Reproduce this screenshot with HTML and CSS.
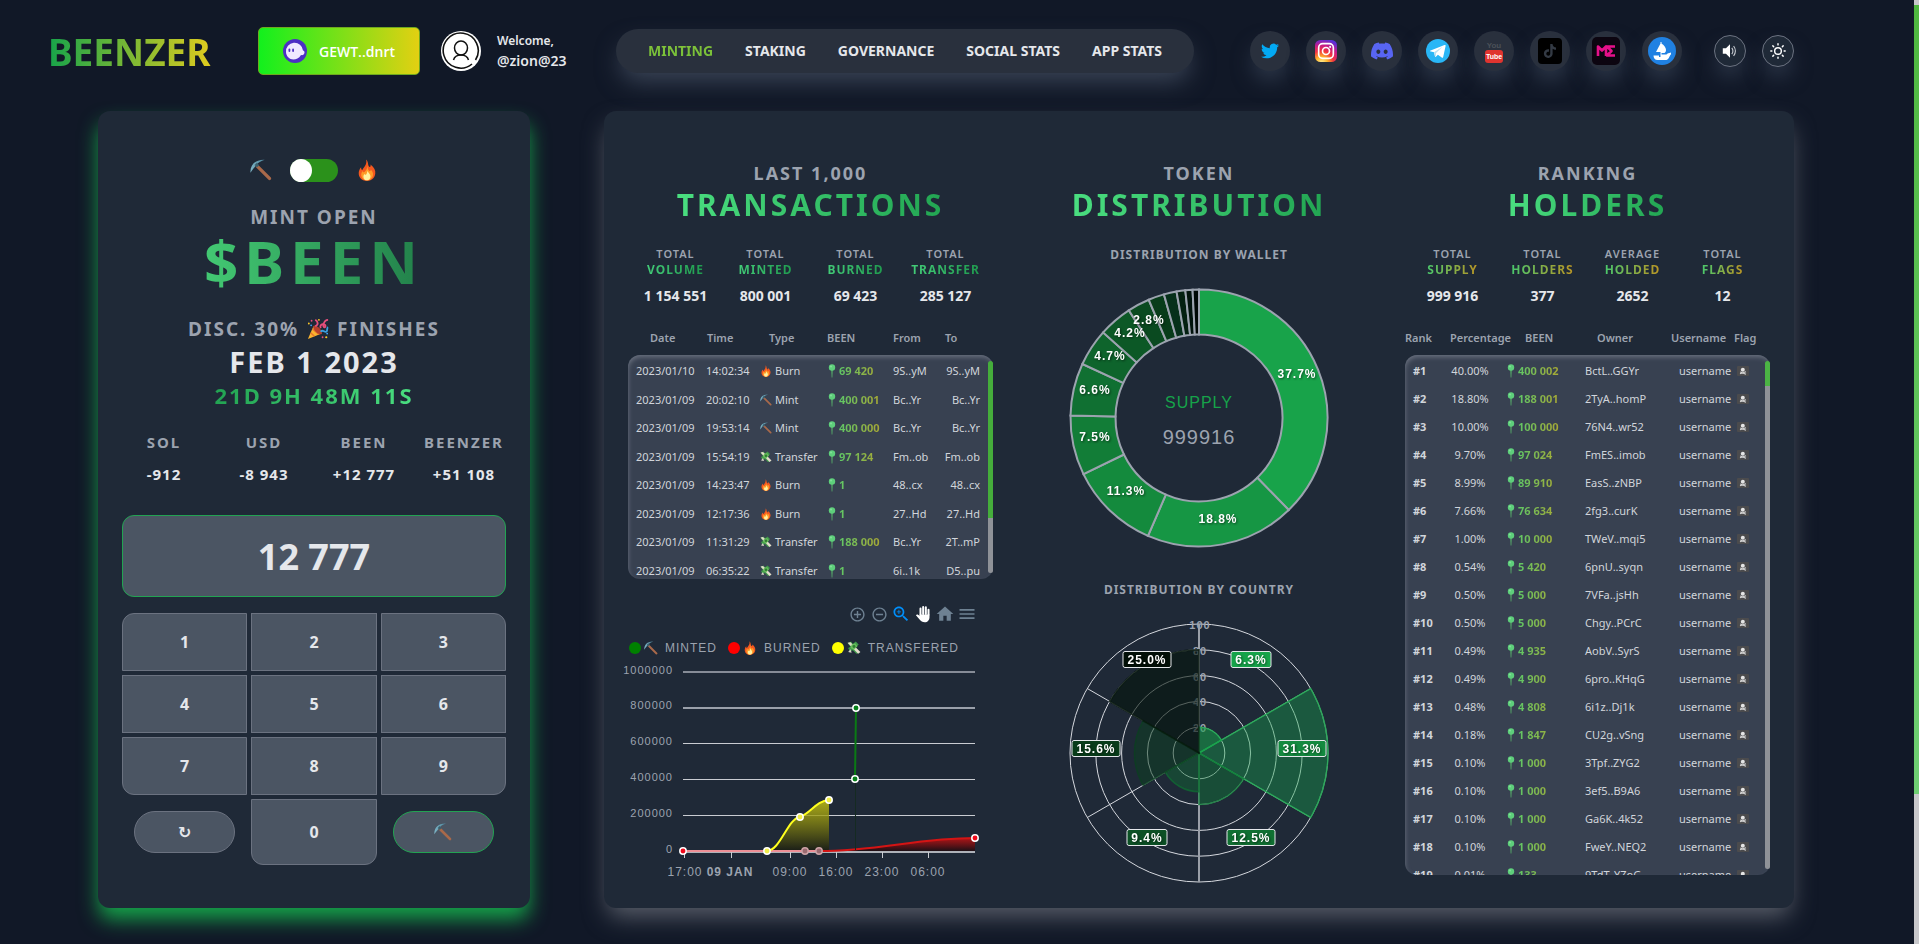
FILE: index.html
```html
<!DOCTYPE html>
<html lang="en">
<head>
<meta charset="utf-8">
<meta name="viewport" content="width=device-width, initial-scale=1">
<title>BEENZER</title>
<link rel="stylesheet" href="styles.css">
<script src="app.js" defer></script>
</head>
<body>
<svg class="sprite" aria-hidden="true">
  <linearGradient id="steel" x1="0" y1="0" x2="1" y2="0"><stop offset="0" stop-color="#7db4c6"/><stop offset="1" stop-color="#4a8499"/></linearGradient>
  <symbol id="pick" viewBox="0 0 24 24">
    <path d="M8.500 6 22.500 20 a1.600 1.600 0 0 1 -2.300 2.700 L6 8.500z" fill="#a9694a"/>
    <path d="M.5 15C0 6.500 6 .3 16 .8c-5 1.700-7.500 3.700-9 5.700S3 11 .5 15z" fill="url(#steel)"/>
    <path d="M5 6.500 7.500 4 10 6.800 7.600 9.300z" fill="#3b5f6c"/>
  </symbol>
  <symbol id="fire" viewBox="0 0 24 24">
    <path d="M11 .5c3 3 1.500 6 3.500 8 1 .8 1.800-.3 1.300-2.500C20 9 21.500 12.500 21 16c-.5 4.800-4.500 7.800-9 7.800S3.500 21 3 16.500c-.3-3 1-6 2.600-7.500-.1 2 .4 3 1.400 3C8 9 12.500 6.500 11 .5z" fill="#f4581f"/>
    <path d="M12 6.500c1 3 .5 4.500 2.500 6.500.8.500 1.500 0 1.700-1.300 2 2 2.600 3.800 2.300 6-.5 3.500-3.300 5.700-6.500 5.700s-6-2.200-6.300-5.600c-.1-2 .6-3.800 1.600-4.800.2 1.200.7 1.700 1.500 1.500C11 13 12.800 10.500 12 6.500z" fill="#ff9b28"/>
    <path d="M12.300 12.500c.5 2.300 3.500 3.300 3.500 6.700 0 2.500-1.700 4.100-3.800 4.100s-3.900-1.500-3.900-4c0-1.500.7-2.500 1.500-3 .3 1 .9 1.200 1.400.7.800-.9 1.300-2 1.300-4.500z" fill="#fff0a0"/>
  </symbol>
  <symbol id="cash" viewBox="0 0 24 24">
    <path d="M1 4 7 1l3 4 5-4 5 5-5 5 7 9-6 2-6-6-5 2-3-6 4-2z" fill="#3f9b4a"/>
    <path d="M1 3 19 22 23 19 6 2z" fill="#e3dccb"/>
    <path d="M8 6 14 4 18 9 12 15 6 12z" fill="#68bb5c"/><circle cx="12" cy="9.500" r="2.500" fill="#2e7d32"/>
    <path d="M2 19l4-5 2 6z" fill="#d7d2c6"/>
  </symbol>
  <symbol id="party" viewBox="0 0 24 24">
    <path d="M1 23 7 9l9 8z" fill="#f9b32f"/><path d="M4 16 8 20M6 12l7 6" stroke="#e8752a" stroke-width="1.500"/>
    <ellipse cx="11.500" cy="13" rx="2.800" ry="6.200" transform="rotate(-45 11.500 13)" fill="#b5402c"/>
    <path d="M9 9c4-2 3-5 0-7M15 11c-2-4 4-6 5-3s-3 3-2-1 3-5 5-5" fill="none" stroke="#e64e7c" stroke-width="2"/>
    <path d="M15 15c2-3 4 1 6 0s0-4 2-5" fill="none" stroke="#3b9fe0" stroke-width="2"/>
    <g fill="#ffca28"><circle cx="2" cy="6" r="1"/><circle cx="13" cy="2" r="1"/><circle cx="21" cy="21" r="1.200"/></g>
    <g fill="#e64e7c"><circle cx="5" cy="3" r="1"/><circle cx="17" cy="21" r="1"/></g><g fill="#42a5f5"><circle cx="4.500" cy="8" r="1"/><circle cx="22" cy="17" r="1"/></g>
  </symbol>
  <symbol id="pin" viewBox="0 0 8 14"><path d="M3.400 6h1.200L4.300 13.500h-.6z" fill="#5dc36f"/><circle cx="4" cy="3.500" r="3.200" fill="#5ecf7b"/><circle cx="3" cy="2.600" r="1" fill="#86e09b"/></symbol>
  <symbol id="flag" viewBox="0 0 12 10"><rect width="12" height="10" rx="1" fill="#4b4b4d"/><circle cx="5.800" cy="3.800" r="2" fill="#e4e4e4"/><path d="M3 7.800 9 5.800M3.200 6 9 8.200" stroke="#d6d6d6" stroke-width="1.200"/></symbol>
</svg>

<div class="shell">
<div class="page">
  <header class="top">
    <a class="logo" href="#">BEENZER</a>
    <button class="wallet" type="button">
      <svg viewBox="0 0 24 24" aria-hidden="true"><circle cx="12" cy="12" r="12" fill="#4c2fc4"/><path d="M3 13a8.500 8.500 0 0 1 17-1.500c1 .3 1.500 1 1.500 2 0 2-2 3-3.500 2.500-2 3.500-5 4.500-7.500 4.500C6.500 20.500 3 17 3 13z" fill="#efeaff"/><rect x="5.500" y="9.500" width="1.800" height="3.500" rx=".9" fill="#4c2fc4"/><rect x="9.200" y="9.500" width="1.800" height="3.500" rx=".9" fill="#4c2fc4"/></svg>
      GEWT..dnrt
    </button>
    <div class="user">
      <svg viewBox="0 0 40 40" aria-hidden="true"><circle cx="20" cy="20" r="20" fill="#fff"/><path d="M31 33a17.500 17.500 0 1 1 3.500-4" fill="none" stroke="#111" stroke-width="1.600"/><ellipse cx="20" cy="17" rx="6.500" ry="7" fill="none" stroke="#111" stroke-width="1.500"/><path d="M12.500 29c1-3.500 4-5 7.500-5s6.500 1.500 7.500 5" fill="none" stroke="#111" stroke-width="1.500"/></svg>
      <p><span>Welcome,</span><b>@zion@23</b></p>
    </div>
    <nav class="menu">
      <a class="on" href="#">MINTING</a><a href="#">STAKING</a><a href="#">GOVERNANCE</a><a href="#">SOCIAL STATS</a><a href="#">APP STATS</a>
    </nav>
    <div class="social">
      <a href="#" aria-label="Twitter"><svg viewBox="0 0 24 24" class="s18"><path fill="#03a9f4" d="M23.953 4.570a10 10 0 01-2.825.775 4.958 4.958 0 002.163-2.723c-.951.555-2.005.959-3.127 1.184a4.920 4.920 0 00-8.384 4.482C7.690 8.095 4.067 6.130 1.640 3.162a4.822 4.822 0 00-.666 2.475c0 1.710.870 3.213 2.188 4.096a4.904 4.904 0 01-2.228-.616v.060a4.923 4.923 0 003.946 4.827 4.996 4.996 0 01-2.212.085 4.936 4.936 0 004.604 3.417 9.867 9.867 0 01-6.102 2.105c-.390 0-.779-.023-1.170-.067a13.995 13.995 0 007.557 2.209c9.053 0 13.998-7.496 13.998-13.985 0-.210 0-.420-.015-.630A9.935 9.935 0 0024 4.590z"/></svg></a>
      <a href="#" aria-label="Instagram"><svg viewBox="0 0 24 24" class="s22"><defs><radialGradient id="ig" cx=".3" cy="1.050" r="1.100"><stop offset="0" stop-color="#fff2a0"/><stop offset=".25" stop-color="#ffb72b"/><stop offset=".5" stop-color="#f2353f"/><stop offset=".75" stop-color="#c51a8a"/><stop offset="1" stop-color="#5a2fd8"/></radialGradient></defs><rect width="24" height="24" rx="6" fill="url(#ig)"/><rect x="4" y="4" width="16" height="16" rx="4.500" fill="none" stroke="#fff" stroke-width="1.800"/><circle cx="12" cy="12" r="3.800" fill="none" stroke="#fff" stroke-width="1.800"/><circle cx="16.500" cy="7.500" r="1.100" fill="#fff"/></svg></a>
      <a href="#" aria-label="Discord"><svg viewBox="0 0 24 24" class="s22"><path fill="#5865f2" d="M20.317 4.370a19.791 19.791 0 00-4.885-1.515.074.074 0 00-.079.037c-.211.375-.445.865-.608 1.249-1.845-.276-3.680-.276-5.487 0-.164-.393-.406-.874-.618-1.249a.077.077 0 00-.079-.037 19.736 19.736 0 00-4.885 1.515.070.070 0 00-.032.028C.533 9.046-.319 13.580.099 18.058a.082.082 0 00.031.056c2.053 1.508 4.041 2.423 5.993 3.029a.078.078 0 00.084-.028c.462-.630.873-1.295 1.226-1.994a.076.076 0 00-.042-.106c-.653-.248-1.274-.550-1.872-.892a.077.077 0 01-.008-.128c.126-.094.252-.192.372-.291a.074.074 0 01.078-.011c3.928 1.793 8.180 1.793 12.061 0a.074.074 0 01.079.010c.120.099.246.198.373.292a.077.077 0 01-.007.128 12.299 12.299 0 01-1.873.891.077.077 0 00-.041.107c.360.698.772 1.363 1.225 1.993a.076.076 0 00.084.029c1.961-.607 3.950-1.522 6.002-3.029a.077.077 0 00.031-.055c.500-5.177-.838-9.674-3.549-13.660a.061.061 0 00-.031-.029zM8.020 15.331c-1.183 0-2.157-1.086-2.157-2.419 0-1.333.956-2.419 2.157-2.419 1.211 0 2.176 1.095 2.157 2.419 0 1.333-.956 2.419-2.157 2.419zm7.975 0c-1.183 0-2.157-1.086-2.157-2.419 0-1.333.955-2.419 2.157-2.419 1.211 0 2.176 1.095 2.157 2.419 0 1.333-.946 2.419-2.157 2.419Z"/></svg></a>
      <a href="#" aria-label="Telegram"><svg viewBox="0 0 24 24" class="s24"><circle cx="12" cy="12" r="12" fill="#29b6f6"/><path fill="#fff" d="M4 11.800 18.500 6c.7-.3 1.300.2 1.100 1.100L17.200 18c-.2.900-.8 1-1.500.6l-3.800-2.800-2 1.900c-.4.400-.8.300-.9-.2L8 13.300 4 12.300z"/><path fill="#b9dff0" d="M8 13.300l8.500-5.500-6.400 6.300-.4 3.500c-.3.200-.6 0-.7-.3z"/></svg></a>
      <a href="#" aria-label="YouTube"><svg viewBox="0 0 24 28" class="yt"><text x="12" y="11" class="you">You</text><rect x="3" y="13" width="18" height="13" rx="3" fill="#e0342f"/><text x="12" y="22" class="tube">Tube</text></svg></a>
      <a href="#" aria-label="TikTok"><svg viewBox="0 0 24 26" class="tt"><rect width="24" height="26" rx="4" fill="#000"/><g transform="translate(5 6) scale(.58)"><path fill="#333a44" d="M12.525.02c1.310-.020 2.610-.010 3.910-.020.080 1.530.630 3.090 1.750 4.170 1.120 1.110 2.700 1.620 4.240 1.790v4.030c-1.440-.050-2.890-.350-4.200-.970-.570-.260-1.100-.590-1.620-.930-.010 2.920.010 5.840-.020 8.750-.080 1.400-.540 2.790-1.350 3.940-1.310 1.920-3.580 3.170-5.910 3.210-1.430.080-2.860-.310-4.080-1.030-2.020-1.190-3.440-3.370-3.650-5.710-.020-.500-.030-1-.010-1.490.180-1.900 1.120-3.720 2.580-4.960 1.660-1.440 3.980-2.130 6.150-1.720.020 1.480-.040 2.960-.040 4.440-.990-.320-2.150-.230-3.020.370-.630.410-1.110 1.040-1.360 1.750-.210.510-.150 1.070-.140 1.610.240 1.640 1.820 3.020 3.500 2.870 1.120-.010 2.190-.660 2.770-1.610.190-.330.400-.670.410-1.060.100-1.790.060-3.570.070-5.360.010-4.030-.010-8.050.020-12.070z"/></g></svg></a>
      <a href="#" aria-label="Magic Eden"><svg viewBox="0 0 28 28" class="me"><rect width="28" height="28" rx="5" fill="#0c0510"/><path d="M6 19V9.500l4 4 4-4V19M23 9.500h-8l4.500 4.500L15 18.500h8" fill="none" stroke="#e6108a" stroke-width="2.600" stroke-linejoin="round"/></svg></a>
      <a href="#" aria-label="OpenSea"><svg viewBox="0 0 28 28" class="me"><circle cx="14" cy="14" r="14" fill="#2081e2"/><path fill="#fff" d="M12.500 6.500 8 15h4.500zM13.500 5v1.500c3 2 4.500 4.500 4.500 6.500 0 1.500-.8 2.500-1.500 3h-3v1.500h5c1-1 2-1.500 4.500-2v2c-1.500.5-1.500 4.500-4.500 5.500H9.500c-2.500 0-4-2-4-4.500h5.500v1.500h1.500V5z"/></svg></a>
      <button type="button" aria-label="Sound"><svg viewBox="0 0 20 20"><path fill="#fff" d="M2 7h3.500L10 2.500v15L5.500 13H2z"/><path d="M12 6.500q2.500 3.500 0 7M14 4.500q4 5.500 0 11" fill="none" stroke="#c8ccd2" stroke-width="1.200"/></svg></button>
      <button type="button" aria-label="Theme"><svg viewBox="0 0 20 20" fill="none" stroke="#fff" stroke-width="1.600" stroke-linecap="round"><circle cx="10" cy="10" r="3.700"/><path d="M10 2v1.200M10 16.800V18M2 10h1.200M16.800 10H18M4.300 4.300l.9.900M14.800 14.800l.9.900M15.700 4.300l-.9.900M5.200 14.800l-.9.900"/></svg></button>
    </div>
  </header>

  <main class="board">
    <section class="mint">
      <div class="mode">
        <svg class="emoji"><use href="#pick"/></svg>
        <input type="checkbox" class="switch" aria-label="Burn mode">
        <svg class="emoji"><use href="#fire"/></svg>
      </div>
      <p class="lead">MINT OPEN</p>
      <h1 class="token">$BEEN</h1>
      <p class="lead offer">DISC. 30% <svg class="emoji"><use href="#party"/></svg> FINISHES</p>
      <p class="date">FEB 1 2023</p>
      <p class="count">21D 9H 48M 11S</p>
      <dl class="cost">
        <div><dt>SOL</dt><dd>-912</dd></div>
        <div><dt>USD</dt><dd>-8 943</dd></div>
        <div><dt>BEEN</dt><dd>+12 777</dd></div>
        <div><dt>BEENZER</dt><dd>+51 108</dd></div>
      </dl>
      <input class="amount" type="text" value="12 777" aria-label="Amount">
      <div class="keys">
        <button type="button">1</button><button type="button">2</button><button type="button">3</button>
        <button type="button">4</button><button type="button">5</button><button type="button">6</button>
        <button type="button">7</button><button type="button">8</button><button type="button">9</button>
        <button type="button" class="pill" aria-label="Reset">↻</button><button type="button" class="zero">0</button><button type="button" class="pill go" aria-label="Mint"><svg class="emoji"><use href="#pick"/></svg></button>
      </div>
    </section>

    <section class="data">
      <article>
        <h2><span>LAST 1,000</span><strong>TRANSACTIONS</strong></h2>
        <dl class="stats">
          <div><dt>TOTAL<em>VOLUME</em></dt><dd>1 154 551</dd></div>
          <div><dt>TOTAL<em>MINTED</em></dt><dd>800 001</dd></div>
          <div><dt>TOTAL<em>BURNED</em></dt><dd>69 423</dd></div>
          <div><dt>TOTAL<em>TRANSFER</em></dt><dd>285 127</dd></div>
        </dl>
        <div class="list tx">
          <table>
            <thead><tr><th>Date</th><th>Time</th><th>Type</th><th>BEEN</th><th>From</th><th>To</th></tr></thead>
            <tbody id="tx-rows"></tbody>
          </table>
          <i class="bar"></i>
        </div>
        <div class="tools">
          <button type="button" aria-label="Zoom in" class="sm"><svg viewBox="0 0 24 24"><path d="M13 7h-2v4H7v2h4v4h2v-4h4v-2h-4V7zm-1-5C6.480 2 2 6.480 2 12s4.480 10 10 10 10-4.480 10-10S17.520 2 12 2zm0 18c-4.410 0-8-3.590-8-8s3.590-8 8-8 8 3.590 8 8-3.590 8-8 8z"/></svg></button>
          <button type="button" aria-label="Zoom out" class="sm"><svg viewBox="0 0 24 24"><path d="M7 11v2h10v-2H7zm5-9C6.480 2 2 6.480 2 12s4.480 10 10 10 10-4.480 10-10S17.520 2 12 2zm0 18c-4.410 0-8-3.590-8-8s3.590-8 8-8 8 3.590 8 8-3.590 8-8 8z"/></svg></button>
          <button type="button" aria-label="Selection zoom" class="sel"><svg viewBox="0 0 24 24"><path d="M15.500 14h-.790l-.280-.270C15.410 12.590 16 11.110 16 9.500 16 5.910 13.090 3 9.500 3S3 5.910 3 9.500 5.910 16 9.500 16c1.610 0 3.090-.590 4.230-1.570l.270.280v.790l5 4.990L20.490 19l-4.990-5zm-6 0C7.010 14 5 11.990 5 9.500S7.010 5 9.500 5 14 7.010 14 9.500 11.990 14 9.500 14z"/><path d="M12 10h-2v2H9v-2H7V9h2V7h1v2h2v1z"/></svg></button>
          <button type="button" aria-label="Pan" class="pan"><svg viewBox="0 0 24 24"><g fill="none" stroke="#fff" stroke-width="2.400" stroke-linecap="round"><path d="M9 13V5.500M12.200 12V3.500M15.400 12V4M18.600 13V7"/></g><path d="M7.800 12.500h12V16c0 3.500-2.300 6-5.600 6-3 0-4.600-1.200-6-3L3.500 13.500c1-1.700 2.600-1.200 4.300.8z"/></svg></button>
          <button type="button" aria-label="Reset zoom"><svg viewBox="0 0 24 24"><path d="M10 20v-6h4v6h5v-8h3L12 3 2 12h3v8z"/></svg></button>
          <button type="button" aria-label="Menu"><svg viewBox="0 0 24 24"><path d="M3 18h18v-2H3v2zm0-5h18v-2H3v2zm0-7v2h18V6H3z"/></svg></button>
        </div>
        <ul class="legend">
          <li><i class="dot g"></i><svg class="emoji"><use href="#pick"/></svg> MINTED</li>
          <li><i class="dot r"></i><svg class="emoji"><use href="#fire"/></svg> BURNED</li>
          <li><i class="dot y"></i><svg class="emoji"><use href="#cash"/></svg> TRANSFERED</li>
        </ul>
        <svg class="area" viewBox="0 0 365 222" role="img" aria-label="Transactions over time">
          <defs>
            <linearGradient id="gy" x1="0" y1="0" x2="0" y2="1"><stop offset="0" stop-color="#d7d40f" stop-opacity=".75"/><stop offset="1" stop-color="#191c14" stop-opacity=".9"/></linearGradient>
            <linearGradient id="gr" x1="0" y1="0" x2="0" y2="1"><stop offset="0" stop-color="#d01010" stop-opacity=".8"/><stop offset="1" stop-color="#1c0d12" stop-opacity=".9"/></linearGradient>
          </defs>
          <g stroke="#c9ccd2"><path stroke="#868c97" stroke-width="2" d="M55 10H347"/><path stroke="#9aa0aa" stroke-width="2" d="M55 46H347"/><path d="M55 81.500H347M55 117.500H347M55 153.500H347"/><path stroke="#aeb2b9" stroke-width="2" d="M55 190H347"/><path d="M56.500 190v6M103.500 190v6M162.500 190v6M208.500 190v6M254.500 190v6M300.500 190v6"/></g>
          <g class="ylab"><text x="45" y="12">1000000</text><text x="45" y="47">800000</text><text x="45" y="83">600000</text><text x="45" y="119">400000</text><text x="45" y="155">200000</text><text x="45" y="191">0</text></g>
          <g class="xlab"><text x="57" y="214">17:00</text><text x="102" y="214" class="bold">09 JAN</text><text x="162" y="214">09:00</text><text x="208" y="214">16:00</text><text x="254" y="214">23:00</text><text x="300" y="214">06:00</text></g>
          <path d="M139 189C152 189 160 156 172 155 183 151 188 139 201 138V189z" fill="url(#gy)"/>
          <path d="M191 189C250 189 290 176 347 176V189z" fill="url(#gr)"/>
          <path d="M55 189H191" stroke="#ed8f96" stroke-width="2"/>
          <path d="M191 189C250 189 290 176 347 176" fill="none" stroke="#d41414" stroke-width="2"/>
          <path d="M139 189C152 189 160 156 172 155 183 151 188 139 201 138" fill="none" stroke="#ffff1e" stroke-width="2"/>
          <path d="M227.500 118V188" stroke="#152a22"/><path d="M227 117 228 46" stroke="#0a7a14" stroke-width="2"/>
          <g stroke="#fff" stroke-width="1.500"><g fill="#07801a"><circle cx="228" cy="46" r="3.200"/><circle cx="227" cy="117" r="3.200"/></g><g fill="#f00a1c"><circle cx="55" cy="189" r="3.200"/><circle cx="347" cy="176" r="3.200"/></g><g fill="#9a6a70" stroke="#cda3a7"><circle cx="177" cy="189" r="3.200"/><circle cx="191" cy="189" r="3.200"/></g><g fill="#f1ee4a"><circle cx="139" cy="189" r="3.200"/><circle cx="172" cy="155" r="3.200"/><circle cx="201" cy="138" r="3.200"/></g></g>
        </svg>
      </article>

      <article class="mid">
        <h2><span>TOKEN</span><strong>DISTRIBUTION</strong></h2>
        <h3>DISTRIBUTION BY WALLET</h3>
        <svg class="round" id="donut" viewBox="-140 -137 280 274" role="img" aria-label="Distribution by wallet"></svg>
        <h3 class="second">DISTRIBUTION BY COUNTRY</h3>
        <svg class="round" id="polar" viewBox="-140 -137 280 274" role="img" aria-label="Distribution by country"></svg>
      </article>

      <article>
        <h2><span>RANKING</span><strong>HOLDERS</strong></h2>
        <dl class="stats gold">
          <div><dt>TOTAL<em>SUPPLY</em></dt><dd>999 916</dd></div>
          <div><dt>TOTAL<em>HOLDERS</em></dt><dd>377</dd></div>
          <div><dt>AVERAGE<em>HOLDED</em></dt><dd>2652</dd></div>
          <div><dt>TOTAL<em>FLAGS</em></dt><dd>12</dd></div>
        </dl>
        <div class="list rank">
          <table>
            <thead><tr><th>Rank</th><th>Percentage</th><th>BEEN</th><th>Owner</th><th>Username</th><th>Flag</th></tr></thead>
            <tbody id="rank-rows"></tbody>
          </table>
          <i class="bar"></i>
        </div>
      </article>
    </section>
  </main>
</div>
<div class="scroll"><i></i></div>
</div>
</body>
</html>
```
FILE: app.js
```js
const icon = (id, cls = 'emoji') => `<svg class="${cls}"><use href="#${id}"/></svg>`;
const been = v => `<td class="been">${icon('pin', 'pin')}<b>${v}</b></td>`;

const kinds = { Burn: 'fire', Mint: 'pick', Transfer: 'cash' };
const tx = [
  ['2023/01/10', '14:02:34', 'Burn', '69 420', '9S..yM', '9S..yM'],
  ['2023/01/09', '20:02:10', 'Mint', '400 001', 'Bc..Yr', 'Bc..Yr'],
  ['2023/01/09', '19:53:14', 'Mint', '400 000', 'Bc..Yr', 'Bc..Yr'],
  ['2023/01/09', '15:54:19', 'Transfer', '97 124', 'Fm..ob', 'Fm..ob'],
  ['2023/01/09', '14:23:47', 'Burn', '1', '48..cx', '48..cx'],
  ['2023/01/09', '12:17:36', 'Burn', '1', '27..Hd', '27..Hd'],
  ['2023/01/09', '11:31:29', 'Transfer', '188 000', 'Bc..Yr', '2T..mP'],
  ['2023/01/09', '06:35:22', 'Transfer', '1', '6i..1k', 'D5..pu']
];
document.getElementById('tx-rows').innerHTML = tx.map(([d, t, k, v, f, o]) =>
  `<tr><td>${d}</td><td>${t}</td><td class="kind">${icon(kinds[k])}${k}</td>${been(v)}<td>${f}</td><td class="end">${o}</td></tr>`).join('');

const holders = [
  ['40.00%', '400 002', 'BctL..GGYr'], ['18.80%', '188 001', '2TyA..homP'], ['10.00%', '100 000', '76N4..wr52'],
  ['9.70%', '97 024', 'FmES..imob'], ['8.99%', '89 910', 'EasS..zNBP'], ['7.66%', '76 634', '2fg3..curK'],
  ['1.00%', '10 000', 'TWeV..mqi5'], ['0.54%', '5 420', '6pnU..syqn'], ['0.50%', '5 000', '7VFa..jsHh'],
  ['0.50%', '5 000', 'Chgy..PCrC'], ['0.49%', '4 935', 'AobV..SyrS'], ['0.49%', '4 900', '6pro..KHqG'],
  ['0.48%', '4 808', '6i1z..Dj1k'], ['0.18%', '1 847', 'CU2g..vSng'], ['0.10%', '1 000', '3Tpf..ZYG2'],
  ['0.10%', '1 000', '3ef5..B9A6'], ['0.10%', '1 000', 'Ga6K..4k52'], ['0.10%', '1 000', 'FweY..NEQ2'],
  ['0.01%', '133', '9TdT..YZoG']
];
document.getElementById('rank-rows').innerHTML = holders.map(([p, v, o], i) =>
  `<tr><th scope="row">#${i + 1}</th><td class="pct">${p}</td>${been(v)}<td>${o}</td><td>username</td><td>${icon('flag', 'flag')}</td></tr>`).join('');

const pt = (r, deg) => {
  const a = deg * Math.PI / 180;
  return `${(r * Math.sin(a)).toFixed(2)} ${(-r * Math.cos(a)).toFixed(2)}`;
};

/* Donut: share of each wallet, clockwise from the top */
const shares = [37.7, 18.8, 11.3, 7.5, 6.6, 4.7, 4.2, 2.8, 2, 1.6, 1.1, 0.9, 0.8];
const greens = ['#18a34a', '#169644', '#148a3d', '#127d37', '#107032', '#0e642c', '#0c5826', '#0a4a20', '#083c1a', '#06301a', '#042011', '#02130c', '#000805'];
const labels = [['37.7%', 98, -40], ['18.8%', 19, 105], ['11.3%', -73, 77], ['7.5%', -104, 23], ['6.6%', -104, -24], ['4.7%', -89, -58], ['4.2%', -69, -81], ['2.8%', -50, -94]];
let from = 0;
document.getElementById('donut').innerHTML = shares.map((s, i) => {
  const to = from + s * 3.6, big = s > 50 ? 1 : 0;
  const d = `M${pt(128.5, from)}A128.5 128.5 0 ${big} 1 ${pt(128.5, to)}L${pt(83.5, to)}A83.5 83.5 0 ${big} 0 ${pt(83.5, from)}z`;
  from = to;
  return `<path d="${d}" fill="${greens[i]}" class="slice"/>`;
}).join('') +
  labels.map(([t, x, y]) => `<text class="share" x="${x}" y="${y}">${t}</text>`).join('') +
  '<text class="supply" x="0" y="-10">SUPPLY</text><text class="total" x="0" y="26">999916</text>';

/* Polar area: one 60 degree sector for each country */
const sectors = [[20, '#16a34a', .55], [100, '#16a34a', .4], [40, '#107a38', .45], [30, '#0f6a32', .45], [50, '#0b4020', .5], [80, '#04140a', .6]];
const tags = [['6.3%', 52, -89, '#16a34a'], ['31.3%', 103, 0, '#138a3f'], ['12.5%', 52, 89, '#107032'], ['9.4%', -52, 89, '#0c5025'], ['15.6%', -103, 0, '#083c1a'], ['25.0%', -52, -89, '#020f07']];
const R = 129;
document.getElementById('polar').innerHTML =
  [1, 2, 3, 4, 5].map(k => `<circle class="ring" r="${R * k / 5}"/>`).join('') +
  [60, 120, 240, 300].map(a => `<path class="ring" d="M0 0L${pt(R, a)}"/>`).join('') +
  `<path class="axis" d="M0 ${-R}V${R}"/>` +
  [100, 80, 60, 40, 20].map(v => `<text class="scale" x="1" y="${-R * v / 100 + 5}">${v}</text>`).join('') +
  sectors.map(([v, c, o], i) => {
    const r = R * v / 100;
    return `<path d="M0 0L${pt(r, i * 60)}A${r} ${r} 0 0 1 ${pt(r, i * 60 + 60)}z" fill="${c}" fill-opacity="${o}" stroke="${c}" stroke-opacity=".8" stroke-width="1.5"/>`;
  }).join('') +
  tags.map(([t, x, y, c]) => {
    const w = t.length > 4 ? 48 : 40;
    return `<rect class="tag" x="${x - w / 2}" y="${y - 12.5}" width="${w}" height="16" rx="2" fill="${c}"/><text class="share" x="${x}" y="${y}">${t}</text>`;
  }).join('');
```
FILE: styles.css
```css
* { box-sizing: border-box; }
body, h1, h2, h3, p, dl, dd, ul { margin: 0; padding: 0; }
body {
  background: #111827;
  color: #e5e7eb;
  font-family: "Noto Sans", "Open Sans", sans-serif;
  font-size: 14px;
}
a { color: inherit; text-decoration: none; }
button, input { font: inherit; color: inherit; margin: 0; cursor: pointer; }
button { padding: 0; }
.sprite { position: absolute; width: 0; height: 0; }
.emoji { width: 22px; height: 22px; flex: none; }

.shell { display: grid; grid-template-columns: 1fr 5px; height: 100vh; }
.page { overflow: hidden; }
.scroll { background: #c8c8cb; padding-top: 5px; }
.scroll i { display: block; height: 84%; background: linear-gradient(#4fb83f, #6fcf73); }

/* header */
.top { display: flex; align-items: center; height: 102px; padding: 0 120px 0 48px; }
.logo {
  width: 210px; font-size: 37px; font-weight: 700;
  background: linear-gradient(90deg, #16a34a, #e2cc1e 165px);
  -webkit-background-clip: text; background-clip: text; color: transparent;
}
.wallet {
  display: flex; align-items: center; gap: 12px; width: 162px; height: 48px; padding: 0 24px;
  border: 1px solid #6fa81f; border-radius: 5px; color: #fff;
  background: linear-gradient(90deg, #12f01d, #e2d012);
  font-family: "Open Sans", sans-serif; font-weight: 600; font-size: 14px;
}
.wallet svg { width: 24px; height: 24px; flex: none; }
.user { display: flex; align-items: center; gap: 16px; width: 175px; margin-left: 21px; }
.user svg { width: 40px; height: 40px; flex: none; }
.user span, .user b { display: block; line-height: 20px; }
.user span { font-size: 12px; font-weight: 600; }
.user b { font-size: 14px; font-weight: 600; }
.menu {
  display: flex; gap: 32px; padding: 0 32px; border-radius: 22px; background: #29303d;
  line-height: 44px; font-weight: 700; white-space: nowrap;
  box-shadow: 0 12px 24px -4px #3b4557;
}
.menu .on { background: linear-gradient(#8cc63a, #6cbd38); -webkit-background-clip: text; background-clip: text; color: transparent; }
.social { display: flex; align-items: center; gap: 16px; margin-left: auto; }
.social a, .social button {
  display: grid; place-items: center; width: 40px; height: 40px; border: 0; border-radius: 50%;
  background: #29303d; box-shadow: 0 12px 20px -2px #2b3547;
}
.social button { width: 32px; height: 32px; border: 1px solid #6b7280; background: #1f2937; }
.social a + button { margin-left: 16px; }
.social button svg { width: 18px; height: 18px; }
.s18 { width: 18px; }
.s22 { width: 22px; }
.s24 { width: 24px; }
.tt { width: 24px; }
.me { width: 28px; }
.yt { width: 24px; }
.yt text { font-family: "Liberation Sans", sans-serif; font-weight: 700; text-anchor: middle; }
.you { fill: #4b5058; font-size: 8px; }
.tube { fill: #fff; font-size: 7px; }

/* cards */
.board { display: grid; grid-template-columns: 432px 1fr; gap: 74px; padding: 9px 120px 35px 98px; }
.mint, .data { background: #1f2937; border-radius: 12px; }
.mint { padding: 43px 24px; box-shadow: 0 12px 20px -1px #16a34a; text-align: center; }
.data {
  display: grid; grid-template-columns: 365px 1fr 365px; padding: 48px 24px 0;
  box-shadow: 0 12px 24px -4px #5b606b;
}

.mode { display: flex; justify-content: center; align-items: center; gap: 18px; height: 32px; }
.switch {
  appearance: none; width: 48px; height: 23px; border-radius: 12px; background: #2b911b;
}
.switch::before { content: ""; display: block; width: 22px; height: 23px; border-radius: 50%; background: #fff; }
.lead { margin-top: 15px; font-size: 19px; line-height: 32px; font-weight: 700; letter-spacing: 2px; color: #9ca3af; }
.lead .emoji { vertical-align: -4px; margin: 0 1px; }
.token {
  width: fit-content; margin: 0 auto; font-size: 60px; line-height: 56px; letter-spacing: 6px; font-weight: 700;
  background: linear-gradient(90deg, #43c973, #22804a);
  -webkit-background-clip: text; background-clip: text; color: transparent;
}
.offer { margin-top: 24px; }
.date { font-size: 29px; line-height: 34px; font-weight: 700; letter-spacing: 2px; }
.count {
  width: fit-content; margin: 0 auto; font-size: 22px; line-height: 32px; font-weight: 700; letter-spacing: 2px;
  background: linear-gradient(90deg, #22a352, #4ade80);
  -webkit-background-clip: text; background-clip: text; color: transparent;
}
.cost { display: grid; grid-template-columns: repeat(4, 100px); justify-content: center; margin-top: 15px; font-weight: 700; font-size: 15px; line-height: 32px; letter-spacing: 2px; }
.cost dt { color: #9ca3af; }
.cost dd { letter-spacing: 1px; }
.amount {
  display: block; width: 100%; height: 82px; margin: 25px 0 16px; border: 1px solid #22a352; border-radius: 12px;
  background: #4b5563; text-align: center; font-size: 36px; font-weight: 700;
}
.keys { display: grid; grid-template-columns: repeat(3, 1fr); gap: 4px; }
.keys button { height: 58px; border: 1px solid #6b7280; background: #4b5563; font-size: 16px; font-weight: 700; }
.keys button:nth-child(1) { border-top-left-radius: 12px; }
.keys button:nth-child(3) { border-top-right-radius: 12px; }
.keys button:nth-child(7) { border-bottom-left-radius: 12px; }
.keys button:nth-child(9) { border-bottom-right-radius: 12px; }
.keys .zero { height: 66px; border-radius: 0 0 12px 12px; }
.keys .pill { display: grid; place-items: center; height: 42px; margin: 12px; border-radius: 21px; font-family: "Noto Sans", "DejaVu Sans", sans-serif; }
.keys .go { border-color: #22a352; }
.keys .go .emoji { width: 18px; height: 18px; }

/* data columns */
h2 { text-align: center; line-height: 28px; font-weight: 700; }
h2 span { display: block; font-size: 18px; letter-spacing: 2px; color: #9ca3af; }
h2 strong {
  display: block; width: fit-content; margin: 0 auto; font-size: 30px; line-height: 36px; letter-spacing: 3px; font-weight: 700;
  background: linear-gradient(90deg, #4ade80, #22a552);
  -webkit-background-clip: text; background-clip: text; color: transparent;
}
h3 { margin-top: 23px; text-align: center; font-size: 12px; line-height: 18px; font-weight: 700; letter-spacing: 1px; color: #9ca3af; }
.second { margin-top: 26px; }
.stats { display: grid; grid-template-columns: repeat(4, 90px); justify-content: center; margin-top: 23px; text-align: center; white-space: nowrap; }
.stats dt { font-size: 11px; line-height: 16px; font-weight: 600; letter-spacing: 1px; color: #9ca3af; }
.stats em {
  display: block; width: fit-content; margin: 0 auto; font-size: 12px; font-style: normal; font-weight: 700;
  background: linear-gradient(90deg, #43cc78, #1f9a4e);
  -webkit-background-clip: text; background-clip: text; color: transparent;
}
.gold em { background-image: linear-gradient(90deg, #4ac86c, #bb9524); }
.stats dd { margin-top: 8px; font-size: 14px; line-height: 20px; font-weight: 700; }

.list { position: relative; margin-top: 18px; }
table, thead, tbody { display: block; }
tr { display: grid; align-items: center; }
th, td { padding: 0; font-size: 11px; line-height: 16px; text-align: left; white-space: nowrap; color: #d1d5db; }
thead th { color: #9ca3af; font-weight: 600; }
thead tr { height: 28px; }
tbody {
  margin-top: 3px; padding: 2px 0; border-radius: 12px; background: #384151; overflow-y: auto; scrollbar-width: none;
  box-shadow: inset 1px 3px 5px -1px #6b7280;
}
tbody tr { height: 28px; }
.tx tbody { height: 224px; }
.tx tbody tr:nth-child(even) { height: 29px; }
.rank tbody { height: 520px; }
.tx tbody tr { grid-template-columns: 70px 54px 68px 65px 43px 1fr; padding: 0 13px 0 8px; }
.tx thead tr { grid-template-columns: 57px 62px 58px 66px 52px 1fr; padding-left: 22px; }
.rank tbody tr { grid-template-columns: 37px 40px 95px 94px 58px 1fr; padding-left: 8px; }
.rank thead tr { grid-template-columns: 45px 75px 72px 74px 63px 1fr; }
.pct { text-align: center; }
.end { text-align: right; }
.kind, .been { display: flex; align-items: center; gap: 3px; }
.kind .emoji { width: 12px; height: 12px; }
.pin { width: 8px; height: 14px; }
.rank .been { padding-left: 17px; }
.been b {
  width: 48px; white-space: nowrap;
  background: linear-gradient(90deg, #5fc766, #b4a32c);
  -webkit-background-clip: text; background-clip: text; color: transparent;
}
.flag { display: block; width: 12px; height: 10px; }
.bar { position: absolute; right: 0; bottom: 6px; width: 5px; border-radius: 3px; }
.tx .bar { height: 212px; background: linear-gradient(#45ad3b 74%, #8f9298 74%); }
.rank .bar { height: 508px; background: linear-gradient(#4bb344 5%, #8f9298 5%); }

/* line chart */
.tools { display: flex; justify-content: flex-end; align-items: center; gap: 2px; height: 24px; margin: 23px 16px 0 0; }
.tools button { display: grid; place-items: center; width: 20px; height: 20px; border: 0; background: none; }
.tools svg { width: 20px; height: 20px; fill: #6e8192; }
.tools .sm svg { width: 17px; height: 17px; }
.tools .sel svg { fill: #008ffb; }
.tools .pan svg { fill: #fff; }
.legend { display: flex; gap: 10px; height: 20px; margin-top: 12px; list-style: none; font: 12px/20px "Liberation Sans", sans-serif; letter-spacing: 1px; color: #9ca3af; }
.legend li { display: flex; align-items: center; }
.legend .emoji { width: 14px; height: 14px; margin: 0 7px 0 3px; }
.dot { width: 12px; height: 12px; border-radius: 50%; margin-left: 1px; }
.g { background: #008000; }
.r { background: #f00; }
.y { background: #ff0; }
.area { display: block; width: 100%; margin-top: 4px; overflow: visible; font-family: "Liberation Sans", sans-serif; letter-spacing: 1px; }
.area text { fill: #9ca3af; }
.ylab { font-size: 11px; text-anchor: end; }
.xlab { font-size: 12px; text-anchor: middle; }
.bold { font-weight: 700; }

/* round charts */
.round { display: block; width: 280px; margin: 17px auto 0; font-family: "Liberation Sans", sans-serif; letter-spacing: 1px; }
.round text { text-anchor: middle; }
.slice { stroke: #9ca3af; stroke-width: 2; }
.share { fill: #fff; font-size: 12px; font-weight: 700; filter: drop-shadow(1px 1px 1px #0008); }
.supply { fill: #16a34a; font-size: 16px; }
.total { fill: #9ca3af; font-size: 20px; }
.ring { fill: none; stroke: #d5d8de; }
.axis { stroke: #9a9fa8; stroke-width: 2; }
.scale { fill: #9ca3af; font-size: 11px; font-weight: 700; }
.tag { stroke: #e5e7eb; }
```
